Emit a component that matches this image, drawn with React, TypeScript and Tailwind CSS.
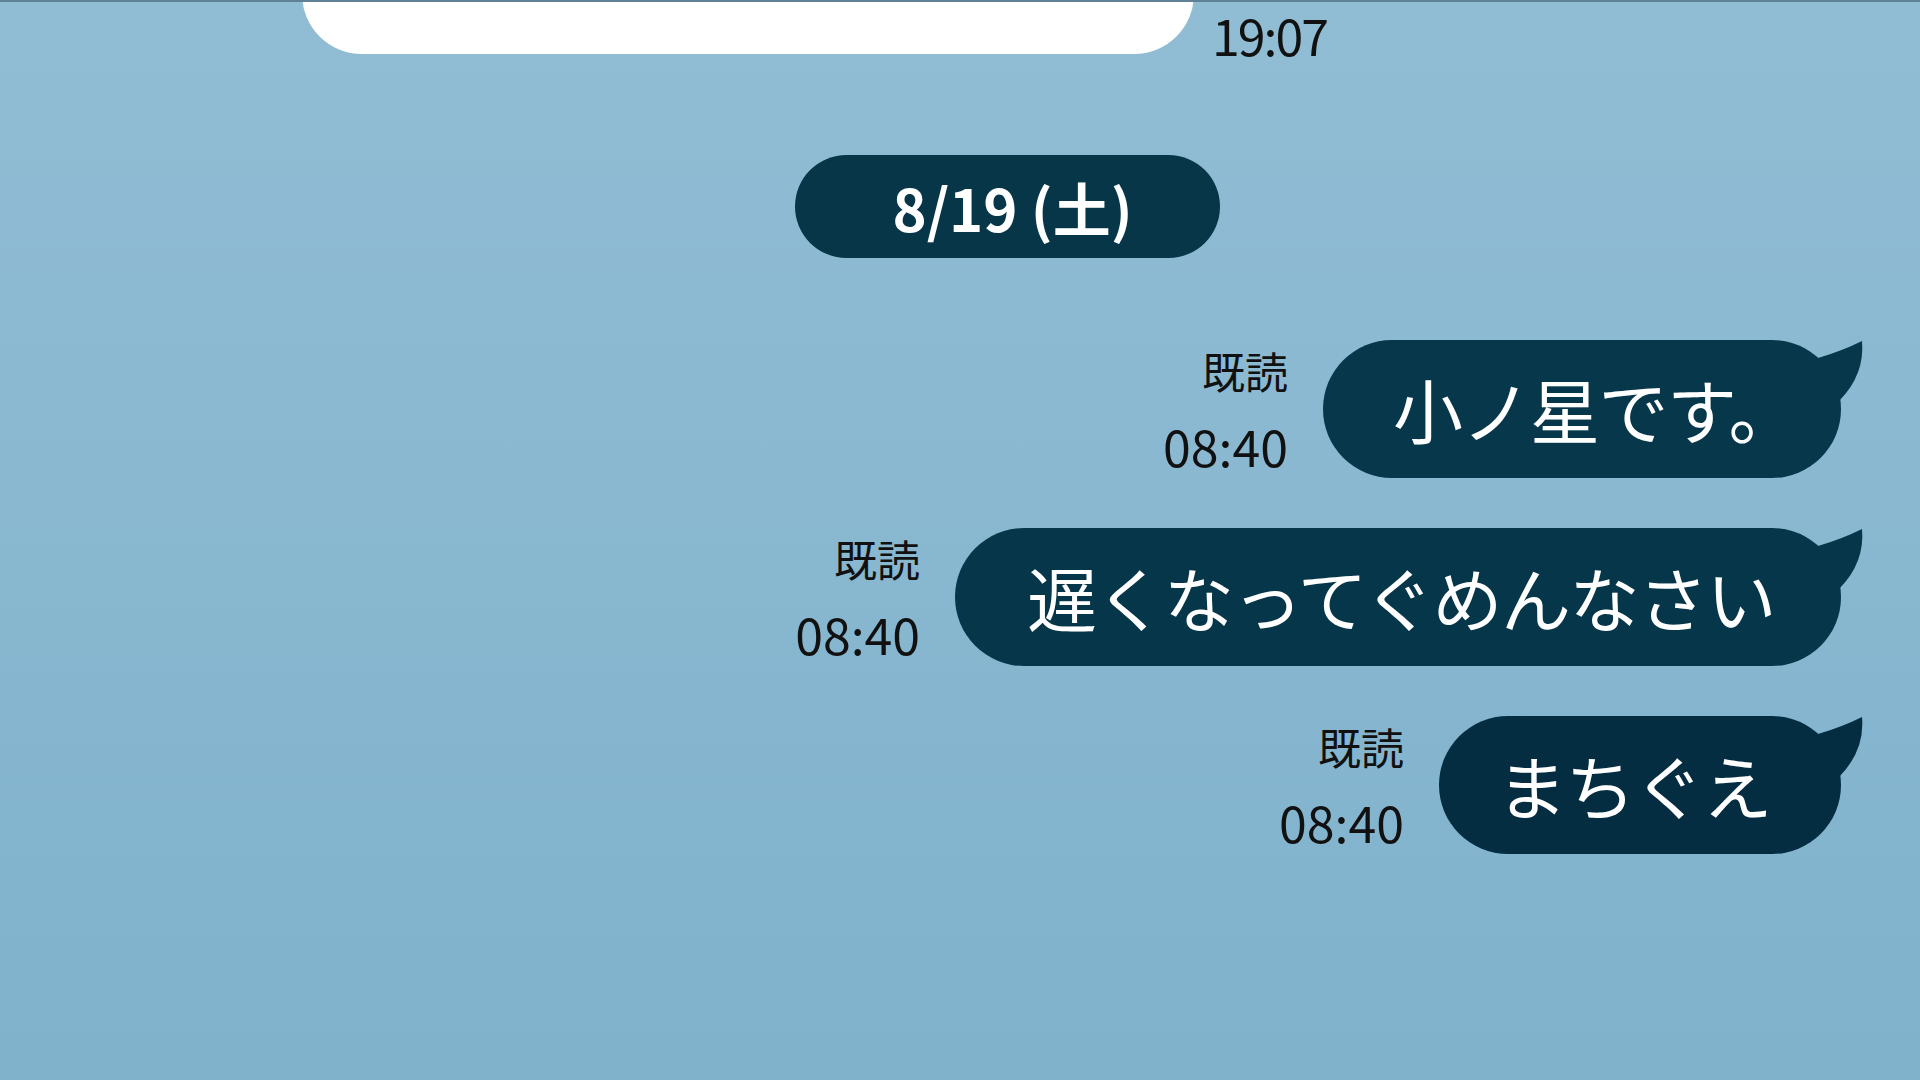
import React from "react";

const FONT = "font-['Noto_Sans_CJK_JP','Noto_Sans',sans-serif]";

function Tail() {
  return (
    <svg
      className="absolute right-[-25px] top-[-2px] h-[70px] w-[66px]"
      viewBox="0 0 66 70"
      aria-hidden="true"
    >
      <path d="M0 8 L18 20 Q42 13 62 3 Q65 36 40 62 L0 62 Z" fill="currentColor" />
    </svg>
  );
}

function SentMessage({ text, pad, tone }: { text: string; pad: string; tone: string }) {
  return (
    <div className="flex items-center justify-end gap-[35px] pr-[79px]">
      <div className="flex flex-col items-end gap-[28px] text-[#111]">
        <span className="text-[43px] leading-none">既読</span>
        <span className="text-[50px] leading-none">08:40</span>
      </div>
      <div className={`relative flex h-[138px] items-center rounded-full ${pad} ${tone}`}>
        <Tail />
        <span className="relative text-[70px] leading-none tracking-[-1.5px] text-white">{text}</span>
      </div>
    </div>
  );
}

export default function App() {
  return (
    <div
      className={`relative h-[1080px] w-[1920px] overflow-hidden bg-gradient-to-b from-[#91bdd4] to-[#80b2cc] ${FONT}`}
    >
      <div className="flex items-start pl-[302px]">
        <div className="mt-[-66px] h-[120px] w-[892px] shrink-0 rounded-[60px] bg-white" />
        <span className="ml-[18px] mt-[9px] text-[50px] leading-none tracking-[-2px] text-[#111]">
          19:07
        </span>
      </div>

      <div className="mt-[96px] flex justify-center pl-[95px]">
        <div className="flex h-[103px] w-[425px] items-center justify-center rounded-full bg-[#073649] pl-[10px]">
          <span className="text-[58px] font-bold leading-none text-white">8/19 (土)</span>
        </div>
      </div>

      <div className="mt-[82px] flex flex-col gap-[50px]">
        <SentMessage text="小ノ星です。" pad="pl-[70px] pr-[44px]" tone="bg-[#07374b] text-[#07374b]" />
        <SentMessage text="遅くなってぐめんなさい" pad="pl-[72px] pr-[66px]" tone="bg-[#06364a] text-[#06364a]" />
        <SentMessage text="まちぐえ" pad="pl-[58px] pr-[70px]" tone="bg-[#042d42] text-[#042d42]" />
      </div>

      <div className="absolute left-0 right-0 top-0 h-[2px] bg-[#5f8196]" />
    </div>
  );
}
